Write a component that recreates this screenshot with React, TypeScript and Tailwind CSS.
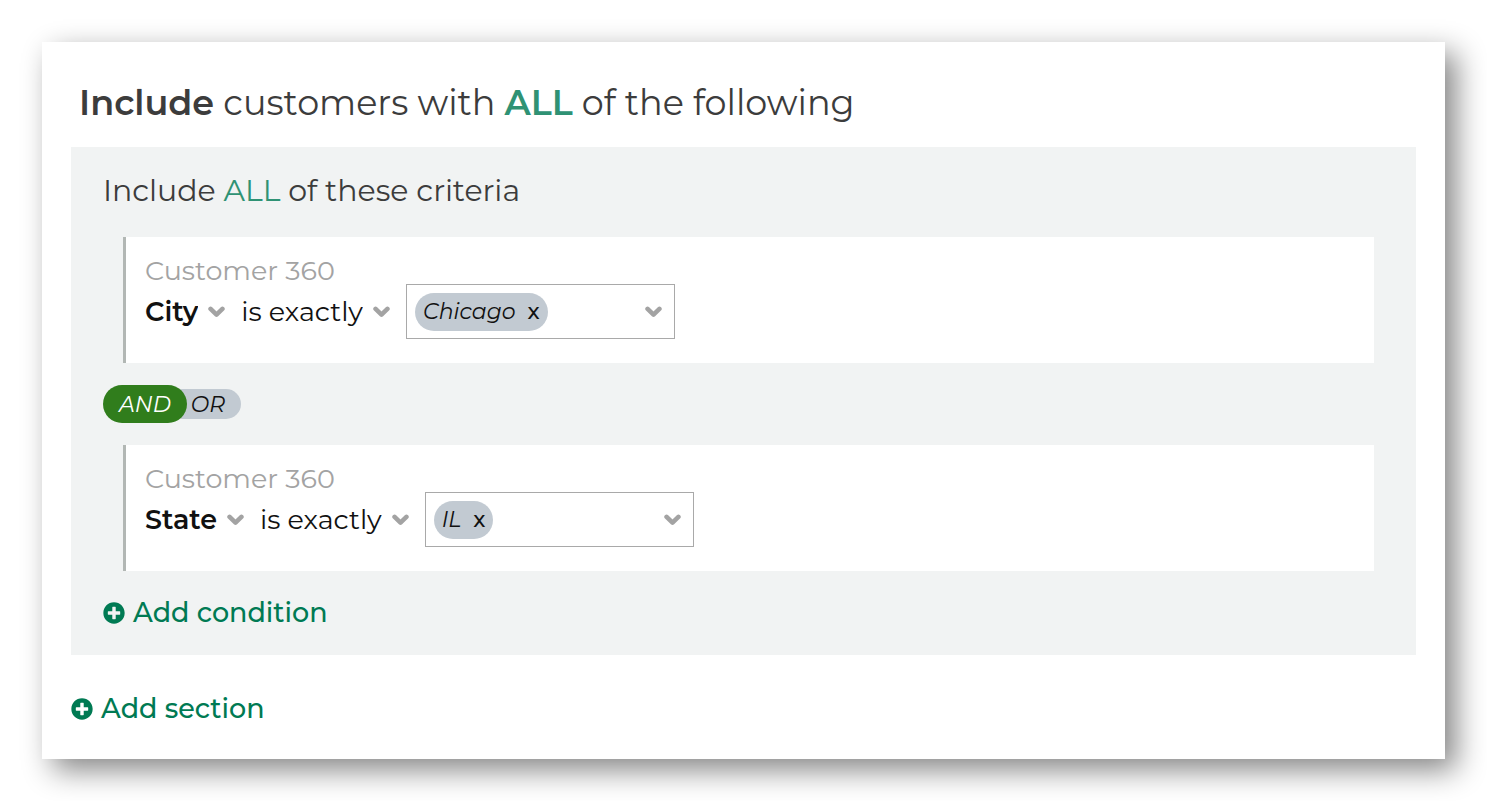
import { useState } from "react";
import { FaPlusCircle } from "react-icons/fa";

type ConditionProps = {
  source: string;
  field: string;
  operator: string;
  value: string;
};

function Chevron() {
  return (
    <svg aria-hidden="true" viewBox="0 0 17 12" className="h-3 w-[17px] shrink-0">
      <path
        d="M2.6 2.9 8.5 8.6 14.4 2.9"
        fill="none"
        stroke="#a3a3a3"
        strokeWidth="4.6"
        strokeLinecap="round"
        strokeLinejoin="round"
      />
    </svg>
  );
}

function InlineSelect({ label, value, bold }: { label: string; value: string; bold?: boolean }) {
  return (
    <div className="flex items-center gap-[10px]">
      <select
        aria-label={label}
        defaultValue={value}
        className={`field-sizing-content h-10 cursor-pointer appearance-none bg-transparent text-[27px] text-[#111111] outline-none ${
          bold ? "font-semibold" : "font-normal"
        }`}
      >
        <option>{value}</option>
      </select>
      <Chevron />
    </div>
  );
}

function Condition({ source, field, operator, value }: ConditionProps) {
  return (
    <div className="mr-[10px] ml-5 border-l-3 border-[#b2b7b4] bg-white pt-5 pb-6 pl-[19px]">
      <p className="text-[27px] leading-[27px] text-[#a3a3a3]">{source}</p>
      <div className="flex items-center gap-4">
        <InlineSelect label="Field" value={field} bold />
        <InlineSelect label="Operator" value={operator} />
        <div className="flex h-[55px] w-[269px] items-center justify-between border border-[#a9a9a9] pr-3 pl-2">
          <span className="flex h-[38px] items-center gap-3 rounded-full bg-[#c2cad2] px-2 text-[22px] text-[#111111]">
            <span className="italic">{value}</span>
            <button type="button" aria-label={`Remove ${value}`} className="cursor-pointer font-medium">
              x
            </button>
          </span>
          <button type="button" aria-label="Choose values" className="cursor-pointer">
            <Chevron />
          </button>
        </div>
      </div>
    </div>
  );
}

function AddButton({ children }: { children: string }) {
  return (
    <button
      type="button"
      className="flex cursor-pointer items-center gap-2 text-[27px] leading-8 font-medium text-[#007a53]"
    >
      <FaPlusCircle aria-hidden="true" className="size-[22px]" />
      {children}
    </button>
  );
}

function JoinToggle() {
  const [join, setJoin] = useState("AND");
  const on = "z-10 h-[38px] bg-[#307d1c] px-4 text-white";
  const off = "h-[30px] bg-[#c2cad2] text-[#111111]";
  return (
    <div
      role="group"
      aria-label="Join conditions"
      className="my-[22px] flex h-[38px] items-center text-[22px] italic"
    >
      <button
        type="button"
        aria-pressed={join === "AND"}
        onClick={() => setJoin("AND")}
        className={`flex cursor-pointer items-center rounded-full ${join === "AND" ? on : `${off} pr-6 pl-4`}`}
      >
        AND
      </button>
      <button
        type="button"
        aria-pressed={join === "OR"}
        onClick={() => setJoin("OR")}
        className={`-ml-5 flex cursor-pointer items-center rounded-full ${join === "OR" ? on : `${off} pr-4 pl-6`}`}
      >
        OR
      </button>
    </div>
  );
}

export default function App() {
  return (
    <main className="bg-white p-[42px] font-[Montserrat,Inter,sans-serif]">
      <div className="bg-white px-[29px] pt-[41px] pb-[34px] shadow-[11px_11px_28px_rgba(0,0,0,0.48)]">
        <h1 className="mb-6 pl-2 text-[35px] leading-10 text-[#3c3c3c]">
          <b className="font-semibold">Include</b> customers with{" "}
          <b className="font-semibold text-[#2f9274]">ALL</b> of the following
        </h1>
        <section className="bg-[#f1f3f3] px-8 pt-[26px] pb-[26px]">
          <h2 className="mb-7 text-[30px] leading-9 text-[#3c3c3c]">
            Include <span className="text-[#2f9274]">ALL</span> of these criteria
          </h2>
          <Condition source="Customer 360" field="City" operator="is exactly" value="Chicago" />
          <JoinToggle />
          <Condition source="Customer 360" field="State" operator="is exactly" value="IL" />
          <div className="mt-[26px]">
            <AddButton>Add condition</AddButton>
          </div>
        </section>
        <div className="mt-[38px]">
          <AddButton>Add section</AddButton>
        </div>
      </div>
    </main>
  );
}
